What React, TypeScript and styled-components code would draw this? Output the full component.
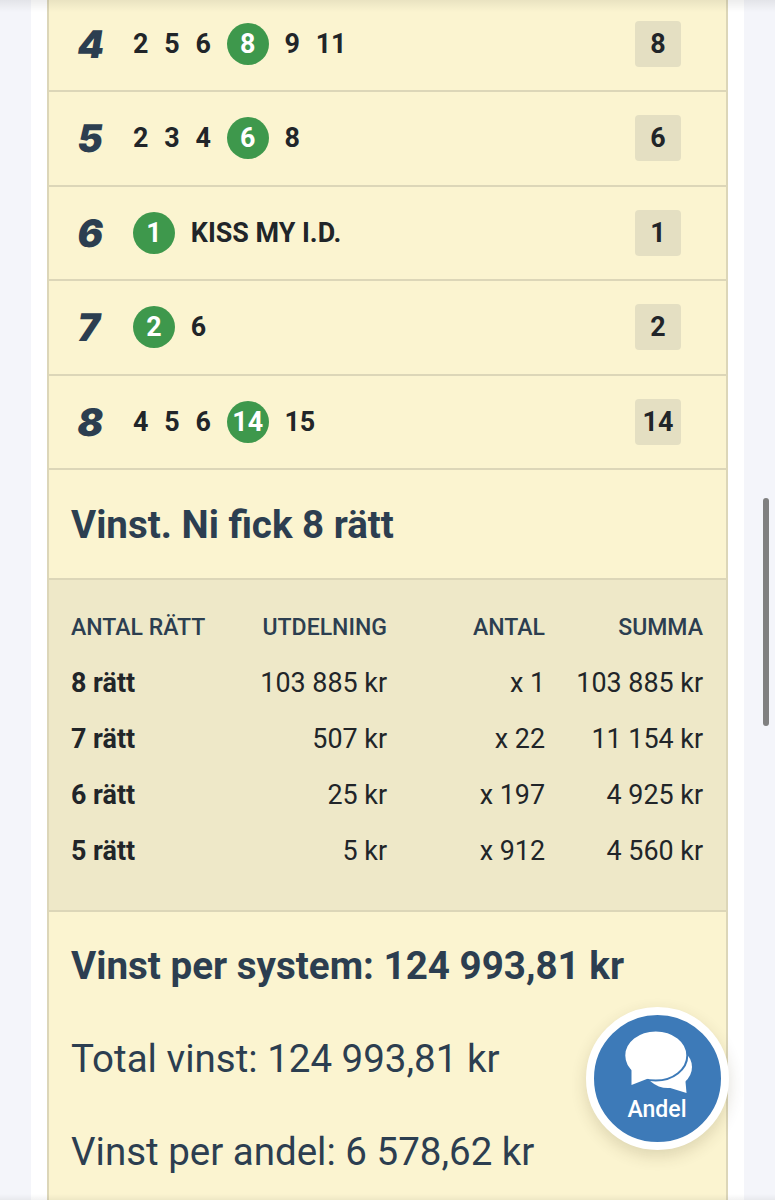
import * as React from "react";
import styled, { createGlobalStyle } from "styled-components";

const GlobalStyle = createGlobalStyle`
    html, body {
        margin: 0;
        padding: 0;
        background: #f4f5fa;
    }
    body {
        font-family: Roboto, "Liberation Sans", sans-serif;
        color: #212529;
    }
`;

const Viewport = styled.div`
    position: relative;
    width: 775px;
    height: 1200px;
    overflow: hidden;
    background: #f4f5fa;
`;

const Column = styled.div`
    width: 713px;
    margin-left: 31px;
    padding: 0 16px;
    box-sizing: border-box;
    background: #fff;
`;

const Card = styled.div`
    width: 681px;
    box-sizing: border-box;
    border-left: 2px solid #dcd6b8;
    border-right: 2px solid #dcd6b8;
    background: #fbf4d0;
`;

const Race = styled.div`
    display: flex;
    align-items: center;
    box-sizing: border-box;
    height: ${props => props.$first ? "92px" : "94.5px"};
    padding: ${props => props.$first ? "0 45px 2px 22px" : "0 45px 0 22px"};
    border-bottom: 2px solid #dcd6b8;
`;

const RaceNumber = styled.div`
    width: 62px;
    flex: none;
    padding-left: 7px;
    box-sizing: border-box;
    font-family: Inter, Roboto, sans-serif;
    font-size: 38px;
    font-weight: 900;
    color: #2c3e50;
    line-height: 42px;
`;

const SlantedDigit = styled.span`
    display: inline-block;
    transform: skewX(-9deg);
`;

const Picks = styled.div`
    display: flex;
    align-items: center;
    flex: 1;
    gap: 15.8px;
    font-size: 26.88px;
    font-weight: 700;
    line-height: 42px;
`;

const Winner = styled.span`
    display: flex;
    align-items: center;
    justify-content: center;
    width: 42px;
    height: 42px;
    border-radius: 50%;
    background: #3e984c;
    color: #fff;
`;

const Badge = styled.div`
    display: flex;
    align-items: center;
    justify-content: center;
    width: 46px;
    height: 46px;
    border-radius: 4px;
    background: #e4dfc2;
    font-size: 26.88px;
    font-weight: 700;
`;

const Heading = styled.h2`
    margin: 0;
    height: 110px;
    padding: 0 22px;
    box-sizing: border-box;
    border-bottom: 2px solid #dcd6b8;
    font-size: 38.5px;
    font-weight: 700;
    line-height: 109px;
    color: #2c3e50;
`;

const Payouts = styled.div`
    display: grid;
    grid-template-columns: 161px 155px 158px 158px;
    grid-auto-rows: 56px;
    align-items: center;
    height: 332px;
    padding: 19px 23px 0 22px;
    box-sizing: border-box;
    background: #eee8c8;
    border-bottom: 2px solid #dcd6b8;
    font-size: 26.88px;
`;

const HeadCell = styled.div`
    font-size: 23.04px;
    font-weight: 500;
    color: #2c3e50;
    text-align: ${props => props.$left ? "left" : "right"};
`;

const Cell = styled.div`
    text-align: right;
    white-space: nowrap;
`;

const RowLabel = styled.div`
    font-weight: 700;
    white-space: nowrap;
`;

const Totals = styled.div`
    padding: 22px 22px 0;
`;

const TotalLine = styled.p`
    margin: 0;
    height: 93px;
    font-size: ${props => props.$bold ? "38.6px" : "38.5px"};
    line-height: 64px;
    font-weight: ${props => props.$bold ? 700 : 400};
    color: #2c3e50;
`;

const ChatButton = styled.button`
    position: absolute;
    left: 586px;
    top: 1007px;
    width: 143px;
    height: 143px;
    padding: 0;
    box-sizing: border-box;
    border: 8px solid #fff;
    border-radius: 50%;
    background: #3d7ab8;
    box-shadow: 0 6px 16px rgba(60, 50, 10, 0.16);
    color: #fff;
    font-family: inherit;
    font-size: 23.04px;
    font-weight: 500;
    display: flex;
    flex-direction: column;
    align-items: center;
`;

const ChatIcon = styled.svg`
    width: 70px;
    height: 66px;
    margin-top: 15px;
`;

const ChatLabel = styled.span`
    line-height: 26px;
    margin: 1px 1px 0 0;
`;

const ScrollThumb = styled.div`
    position: absolute;
    left: 763px;
    top: 498px;
    width: 6px;
    height: 228px;
    border-radius: 3px;
    background: #808080;
`;

const TopShade = styled.div`
    position: absolute;
    left: 0;
    right: 0;
    top: 0;
    height: 12px;
    background: linear-gradient(rgba(0, 0, 0, 0.07), rgba(0, 0, 0, 0));
`;

const BottomShade = styled.div`
    position: absolute;
    left: 0;
    right: 0;
    bottom: 0;
    height: 6px;
    background: linear-gradient(rgba(0, 0, 0, 0), rgba(0, 0, 0, 0.05));
`;

const races = [
    { number: 4, picks: [2, 5, 6, 8, 9, 11], winner: 8 },
    { number: 5, picks: [2, 3, 4, 6, 8], winner: 6 },
    { number: 6, picks: [1], winner: 1, name: "KISS MY I.D." },
    { number: 7, picks: [2, 6], winner: 2 },
    { number: 8, picks: [4, 5, 6, 14, 15], winner: 14 },
];

const payouts = [
    { label: "8 rätt", payout: "103 885 kr", count: "x 1", sum: "103 885 kr" },
    { label: "7 rätt", payout: "507 kr", count: "x 22", sum: "11 154 kr" },
    { label: "6 rätt", payout: "25 kr", count: "x 197", sum: "4 925 kr" },
    { label: "5 rätt", payout: "5 kr", count: "x 912", sum: "4 560 kr" },
];

export default function App() {
    return <Viewport>
        <GlobalStyle/>
        <Column>
            <Card>
                {races.map((race, index) => <Race key={race.number} $first={index === 0}>
                    <RaceNumber><SlantedDigit>{race.number}</SlantedDigit></RaceNumber>
                    <Picks>
                        {race.picks.map(pick => pick === race.winner
                            ? <Winner key={pick}>{pick}</Winner>
                            : <span key={pick}>{pick}</span>)}
                        {race.name && <span>{race.name}</span>}
                    </Picks>
                    <Badge>{race.winner}</Badge>
                </Race>)}
                <Heading>Vinst. Ni fick 8 rätt</Heading>
                <Payouts>
                    <HeadCell $left>ANTAL RÄTT</HeadCell>
                    <HeadCell>UTDELNING</HeadCell>
                    <HeadCell>ANTAL</HeadCell>
                    <HeadCell>SUMMA</HeadCell>
                    {payouts.map(row => <React.Fragment key={row.label}>
                        <RowLabel>{row.label}</RowLabel>
                        <Cell>{row.payout}</Cell>
                        <Cell>{row.count}</Cell>
                        <Cell>{row.sum}</Cell>
                    </React.Fragment>)}
                </Payouts>
                <Totals>
                    <TotalLine $bold>Vinst per system: 124 993,81 kr</TotalLine>
                    <TotalLine>Total vinst: 124 993,81 kr</TotalLine>
                    <TotalLine>Vinst per andel: 6 578,62 kr</TotalLine>
                </Totals>
            </Card>
        </Column>
        <TopShade/>
        <BottomShade/>
        <ScrollThumb/>
        <ChatButton>
            <ChatIcon viewBox="0 0 70 66">
                <ellipse cx="45" cy="37" rx="24" ry="21" fill="#fff"/>
                <path d="M62 46 L63.5 63 L44 57 Z" fill="#fff"/>
                <ellipse cx="32.8" cy="25.5" rx="31.5" ry="25" fill="#fff" stroke="#3d7ab8" strokeWidth="2"/>
                <path d="M8.5 37 L8.5 55 L29 47 L33 44 Z" fill="#fff"/>
            </ChatIcon>
            <ChatLabel>Andel</ChatLabel>
        </ChatButton>
    </Viewport>;
}
